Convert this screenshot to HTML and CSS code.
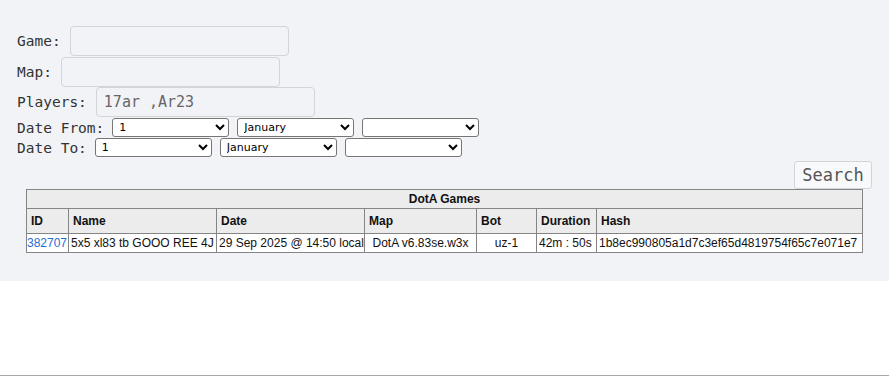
FILE: index.html
```html
<!DOCTYPE html>
<html>
<head>
    <title>DotA Games</title>
    <link rel="stylesheet" href="styles.css">
</head>
<body>
    <div class="search-area">
        <form class="search-form">
            <div class="row">
                <label>Game:</label>
                <input type="text" class="text-input">
            </div>
            <div class="row">
                <label>Map:</label>
                <input type="text" class="text-input">
            </div>
            <div class="row">
                <label>Players:</label>
                <input type="text" class="text-input" value="17ar ,Ar23">
            </div>
            <div class="row date-row">
                <label>Date From:</label>
                <select class="sel"><option>1</option></select>
                <select class="sel"><option>January</option></select>
                <select class="sel"><option></option></select>
            </div>
            <div class="row date-row">
                <label>Date To:</label>
                <select class="sel"><option>1</option></select>
                <select class="sel"><option>January</option></select>
                <select class="sel"><option></option></select>
            </div>
            <div class="button-row">
                <button type="button" class="btn-search">Search</button>
            </div>
        </form>

        <table class="games">
            <colgroup>
                <col class="c-id">
                <col class="c-name">
                <col class="c-date">
                <col class="c-map">
                <col class="c-bot">
                <col class="c-dur">
                <col class="c-hash">
            </colgroup>
            <thead>
                <tr>
                    <th colspan="7" class="title">DotA Games</th>
                </tr>
                <tr class="head">
                    <th>ID</th>
                    <th>Name</th>
                    <th>Date</th>
                    <th>Map</th>
                    <th>Bot</th>
                    <th>Duration</th>
                    <th>Hash</th>
                </tr>
            </thead>
            <tbody>
                <tr>
                    <td class="id"><a href="#">382707</a></td>
                    <td>5x5 xl83 tb GOOO REE 4J</td>
                    <td>29 Sep 2025 @ 14:50 local</td>
                    <td class="center">DotA v6.83se.w3x</td>
                    <td class="center">uz-1</td>
                    <td>42m : 50s</td>
                    <td>1b8ec990805a1d7c3ef65d4819754f65c7e071e7</td>
                </tr>
            </tbody>
        </table>
    </div>
    <div class="footer"></div>
</body>
</html>
```

FILE: styles.css
```css
body {
    margin: 0;
    background-color: #fff;
    font-family: "Liberation Sans", Arial, sans-serif;
}

.search-area {
    background-color: #f2f3f7;
    padding: 26px 17px 28px 17px;
    height: 227px;
}

.search-form {
    margin: 0;
}

.row {
    display: flex;
    align-items: center;
    gap: 9px;
    height: 30.5px;
    font-family: "DejaVu Sans Mono", "Liberation Mono", monospace;
    font-size: 14.5px;
    color: #333;
}

.text-input {
    box-sizing: border-box;
    width: 219px;
    height: 30px;
    padding: 2px 7px;
    border: 1px solid #d3d4d8;
    border-radius: 4px;
    background-color: #f2f3f7;
    font-family: "DejaVu Sans Mono", "Liberation Mono", monospace;
    font-size: 15px;
    color: #666;
}

.date-row {
    height: 20px;
    gap: 8px;
}

.date-row:first-of-type {
    margin-top: 3px;
}

.sel {
    box-sizing: border-box;
    width: 117px;
    height: 19px;
    font-size: 11px;
    font-family: Tahoma, "DejaVu Sans", sans-serif;
    padding: 0 2px;
    border: 1px solid #767676;
    border-radius: 3px;
    background-color: #fff;
    color: #000;
}

.button-row {
    display: flex;
    justify-content: flex-end;
    margin-top: 3px;
}

.btn-search {
    box-sizing: border-box;
    width: 78px;
    height: 28px;
    padding: 0;
    border: 1px solid #d3d4d8;
    border-radius: 3px;
    background-color: #f8f9fa;
    font-family: "DejaVu Sans Mono", "Liberation Mono", monospace;
    font-size: 17px;
    color: #555;
}

.games {
    width: 836px;
    margin: 0 0 0 9px;
    border-collapse: collapse;
    table-layout: fixed;
    font-size: 12px;
    color: #111;
}

.c-id { width: 42px; }
.c-name { width: 148px; }
.c-date { width: 148px; }
.c-map { width: 112px; }
.c-bot { width: 60px; }
.c-dur { width: 60px; }
.c-hash { width: 266px; }

.games th,
.games td {
    border: 1px solid #858585;
    padding: 1px 2px;
    white-space: nowrap;
    overflow: hidden;
}

.games th {
    background-color: #ececec;
    text-align: left;
    font-weight: bold;
}

.games th.title {
    text-align: center;
    height: 16px;
}

.games tr.head th {
    height: 22px;
    padding-left: 4px;
}

.games td {
    background-color: #fff;
    height: 16px;
}

.games td.id {
    padding-left: 0;
}

.games td.center {
    text-align: center;
}

.games a {
    color: #1f6fd6;
    text-decoration: none;
}

.footer {
    height: 94px;
    border-bottom: 1px solid #a6a6ad;
}
```
